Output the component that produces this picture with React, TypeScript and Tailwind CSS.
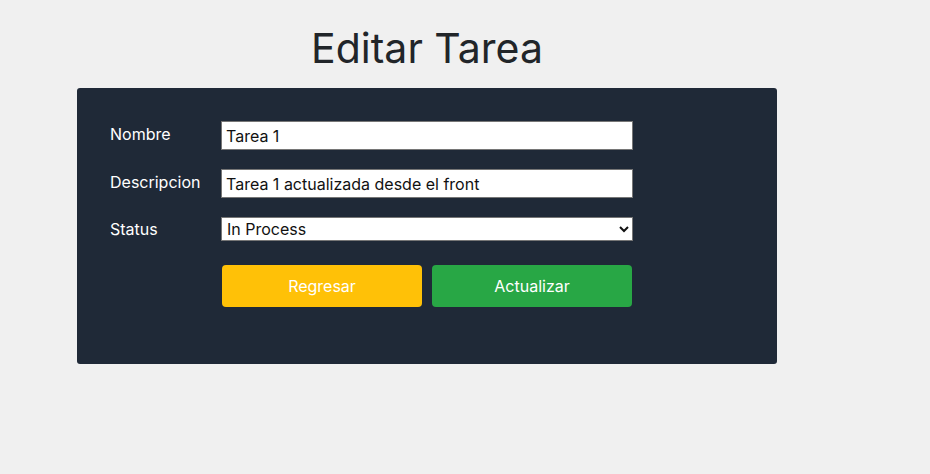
import { useState } from 'react'

export default function App() {
  const [nombre, setNombre] = useState('Tarea 1')
  const [descripcion, setDescripcion] = useState('Tarea 1 actualizada desde el front')
  const [status, setStatus] = useState('In Process')

  return (
    <div className="min-h-screen bg-[#f0f0f0] font-['Inter',sans-serif]">
      <div className="w-[700px] ml-[77px]">
        <h1 className="text-center text-[41px] leading-[48px] pt-[24px] pb-[16px] text-[#212529]">Editar Tarea</h1>

        <form className="bg-[#1f2937] rounded-[3px] pl-[33px] pt-[33px] pb-[57px]" onSubmit={(e) => e.preventDefault()}>
          <div className="grid grid-cols-[111px_412px] gap-y-[19px]">
            <label className="text-white text-base pt-[1px]">Nombre</label>
            <input
              value={nombre}
              onChange={(e) => setNombre(e.target.value)}
              className="h-[29px] bg-white border border-[#767676] px-[4px] text-base text-[#111]"
            />

            <label className="text-white text-base pt-[1px]">Descripcion</label>
            <input
              value={descripcion}
              onChange={(e) => setDescripcion(e.target.value)}
              className="h-[29px] bg-white border border-[#767676] px-[4px] text-base text-[#111]"
            />

            <label className="text-white text-base leading-[24px]">Status</label>
            <select
              value={status}
              onChange={(e) => setStatus(e.target.value)}
              className="h-[24px] bg-white border border-[#767676] pl-[1px] text-base text-[#111] appearance-auto"
            >
              <option>Pending</option>
              <option>In Process</option>
              <option>Done</option>
            </select>
          </div>

          <div className="flex gap-[10px] ml-[112px] mt-[24px]">
            <button type="button" className="w-[200px] h-[42px] rounded-[4px] bg-[#ffc107] text-white text-base">
              Regresar
            </button>
            <button type="submit" className="w-[200px] h-[42px] rounded-[4px] bg-[#28a745] text-white text-base">
              Actualizar
            </button>
          </div>
        </form>
      </div>
    </div>
  )
}
